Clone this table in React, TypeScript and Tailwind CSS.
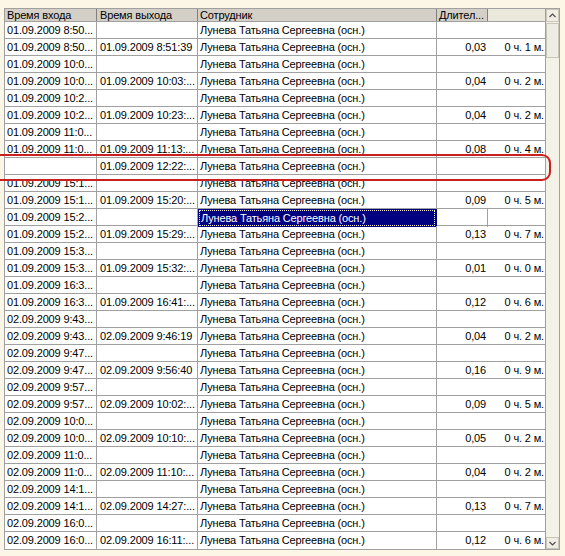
type Row = {
  inTime: string;
  outTime: string;
  hours: string;
  dur: string;
};

const rows: Row[] = [
  { inTime: "01.09.2009 8:50...", outTime: "", hours: "", dur: "" },
  { inTime: "01.09.2009 8:50...", outTime: "01.09.2009 8:51:39", hours: "0,03", dur: "0 ч. 1 м." },
  { inTime: "01.09.2009 10:0...", outTime: "", hours: "", dur: "" },
  { inTime: "01.09.2009 10:0...", outTime: "01.09.2009 10:03:...", hours: "0,04", dur: "0 ч. 2 м." },
  { inTime: "01.09.2009 10:2...", outTime: "", hours: "", dur: "" },
  { inTime: "01.09.2009 10:2...", outTime: "01.09.2009 10:23:...", hours: "0,04", dur: "0 ч. 2 м." },
  { inTime: "01.09.2009 11:0...", outTime: "", hours: "", dur: "" },
  { inTime: "01.09.2009 11:0...", outTime: "01.09.2009 11:13:...", hours: "0,08", dur: "0 ч. 4 м." },
  { inTime: "", outTime: "01.09.2009 12:22:...", hours: "", dur: "" },
  { inTime: "01.09.2009 15:1...", outTime: "", hours: "", dur: "" },
  { inTime: "01.09.2009 15:1...", outTime: "01.09.2009 15:20:...", hours: "0,09", dur: "0 ч. 5 м." },
  { inTime: "01.09.2009 15:2...", outTime: "", hours: "", dur: "" },
  { inTime: "01.09.2009 15:2...", outTime: "01.09.2009 15:29:...", hours: "0,13", dur: "0 ч. 7 м." },
  { inTime: "01.09.2009 15:3...", outTime: "", hours: "", dur: "" },
  { inTime: "01.09.2009 15:3...", outTime: "01.09.2009 15:32:...", hours: "0,01", dur: "0 ч. 0 м." },
  { inTime: "01.09.2009 16:3...", outTime: "", hours: "", dur: "" },
  { inTime: "01.09.2009 16:3...", outTime: "01.09.2009 16:41:...", hours: "0,12", dur: "0 ч. 6 м." },
  { inTime: "02.09.2009 9:43...", outTime: "", hours: "", dur: "" },
  { inTime: "02.09.2009 9:43...", outTime: "02.09.2009 9:46:19", hours: "0,04", dur: "0 ч. 2 м." },
  { inTime: "02.09.2009 9:47...", outTime: "", hours: "", dur: "" },
  { inTime: "02.09.2009 9:47...", outTime: "02.09.2009 9:56:40", hours: "0,16", dur: "0 ч. 9 м." },
  { inTime: "02.09.2009 9:57...", outTime: "", hours: "", dur: "" },
  { inTime: "02.09.2009 9:57...", outTime: "02.09.2009 10:02:...", hours: "0,09", dur: "0 ч. 5 м." },
  { inTime: "02.09.2009 10:0...", outTime: "", hours: "", dur: "" },
  { inTime: "02.09.2009 10:0...", outTime: "02.09.2009 10:10:...", hours: "0,05", dur: "0 ч. 2 м." },
  { inTime: "02.09.2009 11:0...", outTime: "", hours: "", dur: "" },
  { inTime: "02.09.2009 11:0...", outTime: "02.09.2009 11:10:...", hours: "0,04", dur: "0 ч. 2 м." },
  { inTime: "02.09.2009 14:1...", outTime: "", hours: "", dur: "" },
  { inTime: "02.09.2009 14:1...", outTime: "02.09.2009 14:27:...", hours: "0,13", dur: "0 ч. 7 м." },
  { inTime: "02.09.2009 16:0...", outTime: "", hours: "", dur: "" },
  { inTime: "02.09.2009 16:0...", outTime: "02.09.2009 16:11:...", hours: "0,12", dur: "0 ч. 6 м." },
];

const EMPLOYEE = "Лунева Татьяна Сергеевна (осн.)";
const SELECTED = 11;

function ScrollBar() {
  return (
    <div className="flex w-[14px] flex-col border-l border-[#a0a0a0] bg-[#f4f1e6]">
      <div className="flex h-[13px] items-center justify-center border border-[#c9c5b8] bg-[#f0eee4]">
        <svg width="7" height="5" viewBox="0 0 7 5">
          <path d="M0.5 4 L3.5 1 L6.5 4" fill="none" stroke="#4d4d4d" strokeWidth="1.2" />
        </svg>
      </div>
      <div className="mt-[1px] h-[35px] border border-[#c9c5b8] bg-[#efede3]" />
      <div className="flex-1" />
      <div className="flex h-[12px] items-center justify-center border border-[#c9c5b8] bg-[#f0eee4]">
        <svg width="7" height="5" viewBox="0 0 7 5">
          <path d="M0.5 1 L3.5 4 L6.5 1" fill="none" stroke="#4d4d4d" strokeWidth="1.2" />
        </svg>
      </div>
    </div>
  );
}

export default function App() {
  return (
    <div className="relative h-[556px] w-[565px] overflow-hidden bg-[#fcf6e6] pl-[4px] pt-[8px] font-['Liberation_Sans',Arial,sans-serif] text-[11px] tracking-[-0.15px] text-black">
      <div className="flex w-[556px] border border-[#a0a0a0] bg-white">
        <div className="w-[540px]">
          {/* header */}
          <div className="grid h-[13px] grid-cols-[92px_101px_239px_51px_57px] border-b border-[#a0a0a0] leading-[12px]">
            <div className="border-r border-[#808080] bg-[#d4d0c8] pl-[2px]">Время входа</div>
            <div className="border-r border-[#808080] bg-[#d4d0c8] pl-[3px]">Время выхода</div>
            <div className="border-r border-[#808080] bg-[#d4d0c8] pl-[2px]">Сотрудник</div>
            <div className="border-r border-[#808080] bg-[#d4d0c8] pl-[2px]">Длител...</div>
            <div className="bg-[#ebe8dc]" />
          </div>
          {rows.map((r, i) => {
            const selected = i === SELECTED;
            const last = i === rows.length - 1;
            return (
              <div
                key={i}
                className={`grid h-[17px] grid-cols-[92px_101px_239px_51px_57px] whitespace-nowrap leading-[16px] ${
                  last ? "" : "border-b border-[#a0a0a0]"
                }`}
              >
                <div className="overflow-hidden border-r border-[#a0a0a0] pl-[2px]">{r.inTime}</div>
                <div className="overflow-hidden border-r border-[#a0a0a0] pl-[3px]">{r.outTime}</div>
                {selected ? (
                  <div className="border-r border-[#000080] bg-[#000080] p-[1px] text-white">
                    <div className="h-full border border-dotted border-[#f0f0c0] pl-[1px] leading-[14px]">
                      {EMPLOYEE}
                    </div>
                  </div>
                ) : (
                  <div className="overflow-hidden border-r border-[#a0a0a0] pl-[2px]">{EMPLOYEE}</div>
                )}
                <div className={`pr-[2px] text-right ${selected ? "border-r border-[#a0a0a0]" : ""}`}>
                  {r.hours}
                </div>
                <div className="pr-[1px] text-right">{r.dur}</div>
              </div>
            );
          })}
        </div>
        <ScrollBar />
      </div>

      {/* red annotation around the row without entry time */}
      <div className="pointer-events-none absolute left-[-20px] top-[154px] h-[27px] w-[571px] rounded-[9px] border-2 border-[#c8201e]" />
    </div>
  );
}
